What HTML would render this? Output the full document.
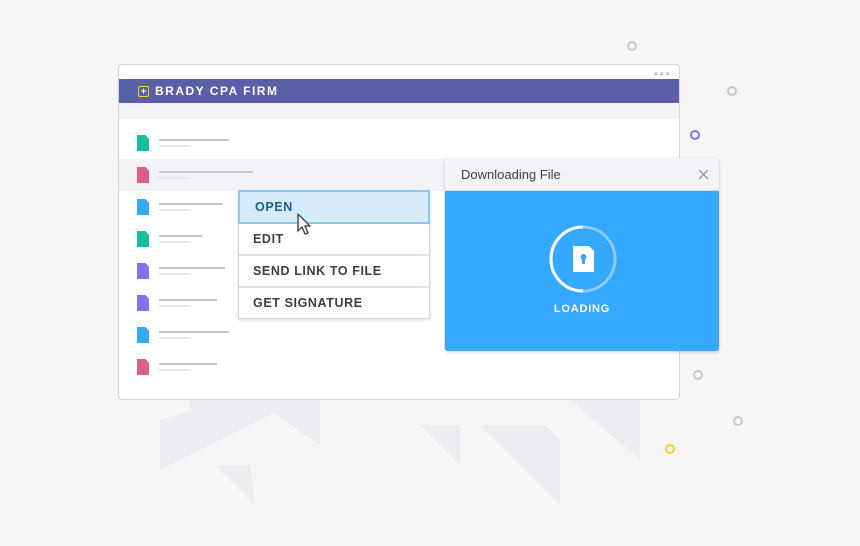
<!DOCTYPE html>
<html><head><style>
*{margin:0;padding:0;box-sizing:border-box}
body{width:860px;height:546px;background:#f6f6f7;position:relative;overflow:hidden;font-family:"Liberation Sans",sans-serif}
.abs{position:absolute}
.win{left:118px;top:64px;width:562px;height:336px;background:#fff;border:1px solid #d4d4dc;border-radius:4px;overflow:hidden}
.bar{left:0;top:14px;width:100%;height:24px;background:#5a5fa7;color:#fff;font-weight:bold;font-size:12px;letter-spacing:1.5px;line-height:24px;padding-left:36px}
.strip{left:0;top:38px;width:100%;height:16px;background:#f3f3f7}
.hl{left:0;top:94px;width:100%;height:32px;background:#f3f3f7}
.fi{width:12px;height:16px;clip-path:polygon(0 0,70% 0,100% 25%,100% 100%,0 100%)}
.l1{height:2px;background:#c8c8d0}
.l2{height:2px;background:#e6e6ec}
.menu{left:238px;top:190px;width:192px;height:129px;background:#fff;border:1px solid #d6d6de;box-shadow:0 1px 3px rgba(0,0,0,.15)}
.mi{height:32px;border-bottom:2px solid #e2e2e8;font-size:12.5px;font-weight:bold;letter-spacing:0.6px;color:#3c3c48;line-height:31px;padding-left:14px}
.pop{left:445px;top:158px;width:274px;height:193px;border-radius:3px;overflow:hidden;box-shadow:0 1px 3px rgba(0,0,0,.2)}
</style></head><body>
<svg class="abs" style="left:0;top:0" width="860" height="546">
<g fill="#ededf1">
<polygon points="160,420 230,400 300,400 160,470"/>
<polygon points="190,400 190,445 235,400"/>
<polygon points="255,400 320,400 320,445"/>
<polygon points="215,465 250,465 255,505"/>
<polygon points="420,425 460,425 460,465"/>
<polygon points="480,425 545,425 560,440 560,505"/>
<polygon points="500,400 570,400 640,460 640,400"/>
<polygon points="580,400 600,400 600,420"/>
</g>
<g fill="none" stroke-width="2">
<circle cx="632" cy="46" r="4" stroke="#c8c8d0"/>
<circle cx="732" cy="91" r="4" stroke="#c8c8d0"/>
<circle cx="695" cy="135" r="4" stroke="#7b73e8"/>
<circle cx="698" cy="375" r="4" stroke="#c8c8d0"/>
<circle cx="738" cy="421" r="4" stroke="#c8c8d0"/>
<circle cx="670" cy="449" r="4" stroke="#f5d020"/>
</g>
</svg>
<div class="abs win">
<div class="abs" style="right:8px;top:4px;font-size:8px;color:#c4c4cc;letter-spacing:1px">●●●</div>
<div class="abs bar">BRADY CPA FIRM</div>
<div class="abs" style="left:19px;top:21px;width:11px;height:11px;border:1.5px solid #f5d020;border-radius:2px;color:#fff;font-size:9px;line-height:8px;text-align:center;font-weight:bold">+</div>
<div class="abs strip"></div>
<div class="abs hl"></div>
</div>
<div class="abs fi" style="left:137px;top:135px;background:#14c196"></div>
<div class="abs fi" style="left:137px;top:167px;background:#dd5f86"></div>
<div class="abs fi" style="left:137px;top:199px;background:#34a8ff"></div>
<div class="abs fi" style="left:137px;top:231px;background:#14c196"></div>
<div class="abs fi" style="left:137px;top:263px;background:#8372f0"></div>
<div class="abs fi" style="left:137px;top:295px;background:#8372f0"></div>
<div class="abs fi" style="left:137px;top:327px;background:#34a8ff"></div>
<div class="abs fi" style="left:137px;top:359px;background:#dd5f86"></div>
<div class="abs l1" style="left:159px;top:139px;width:70px"></div><div class="abs l2" style="left:159px;top:145px;width:32px"></div>
<div class="abs l1" style="left:159px;top:171px;width:94px"></div><div class="abs l2" style="left:159px;top:177px;width:32px"></div>
<div class="abs l1" style="left:159px;top:203px;width:64px"></div><div class="abs l2" style="left:159px;top:209px;width:32px"></div>
<div class="abs l1" style="left:159px;top:235px;width:43px"></div><div class="abs l2" style="left:159px;top:241px;width:32px"></div>
<div class="abs l1" style="left:159px;top:267px;width:66px"></div><div class="abs l2" style="left:159px;top:273px;width:32px"></div>
<div class="abs l1" style="left:159px;top:299px;width:58px"></div><div class="abs l2" style="left:159px;top:305px;width:32px"></div>
<div class="abs l1" style="left:159px;top:331px;width:70px"></div><div class="abs l2" style="left:159px;top:337px;width:32px"></div>
<div class="abs l1" style="left:159px;top:363px;width:58px"></div><div class="abs l2" style="left:159px;top:369px;width:32px"></div>
<div class="abs menu">
<div class="mi" style="background:#d6ecfc;border:2px solid #8cc6f2;color:#1f5c9c;margin:-1px -1px 0 -1px;height:34px;padding-left:15px">OPEN</div>
<div class="mi">EDIT</div>
<div class="mi">SEND LINK TO FILE</div>
<div class="mi" style="border:none">GET SIGNATURE</div>
</div>
<svg class="abs" style="left:296px;top:212px" width="18" height="24"><path d="M2 2 L2 19 L6 15 L9 22 L12 21 L9 14 L14 14 Z" fill="#fff" stroke="#4a4a58" stroke-width="1.5" stroke-linejoin="round"/></svg>
<div class="abs pop">
<div style="height:33px;background:#f4f4f8;border-bottom:1px solid #d8d8e0;font-size:13px;color:#3c3c48;line-height:33px;padding-left:16px;position:relative">Downloading File<svg class="abs" style="right:10px;top:11px" width="11" height="11"><path d="M1 1L10 10M10 1L1 10" stroke="#888" stroke-width="1.2"/></svg></div>
<div style="height:160px;background:#35a8ff;position:relative">
<svg class="abs" style="left:103px;top:33px" width="70" height="70"><circle cx="35" cy="35" r="32" fill="none" stroke="#8ccbff" stroke-width="3"/><path d="M35 3 A32 32 0 0 0 35 67" fill="none" stroke="#fff" stroke-width="3"/><path d="M25 22 H41 L46 27 V48 H25 Z" fill="#fff"/><circle cx="35.5" cy="33" r="3" fill="#35a8ff"/><rect x="34" y="33" width="3" height="7" fill="#35a8ff"/></svg>
<div class="abs" style="left:0;width:100%;top:112px;text-align:center;color:#fff;font-weight:bold;font-size:11px;letter-spacing:0.8px">LOADING</div>
</div></div>
</body></html>
